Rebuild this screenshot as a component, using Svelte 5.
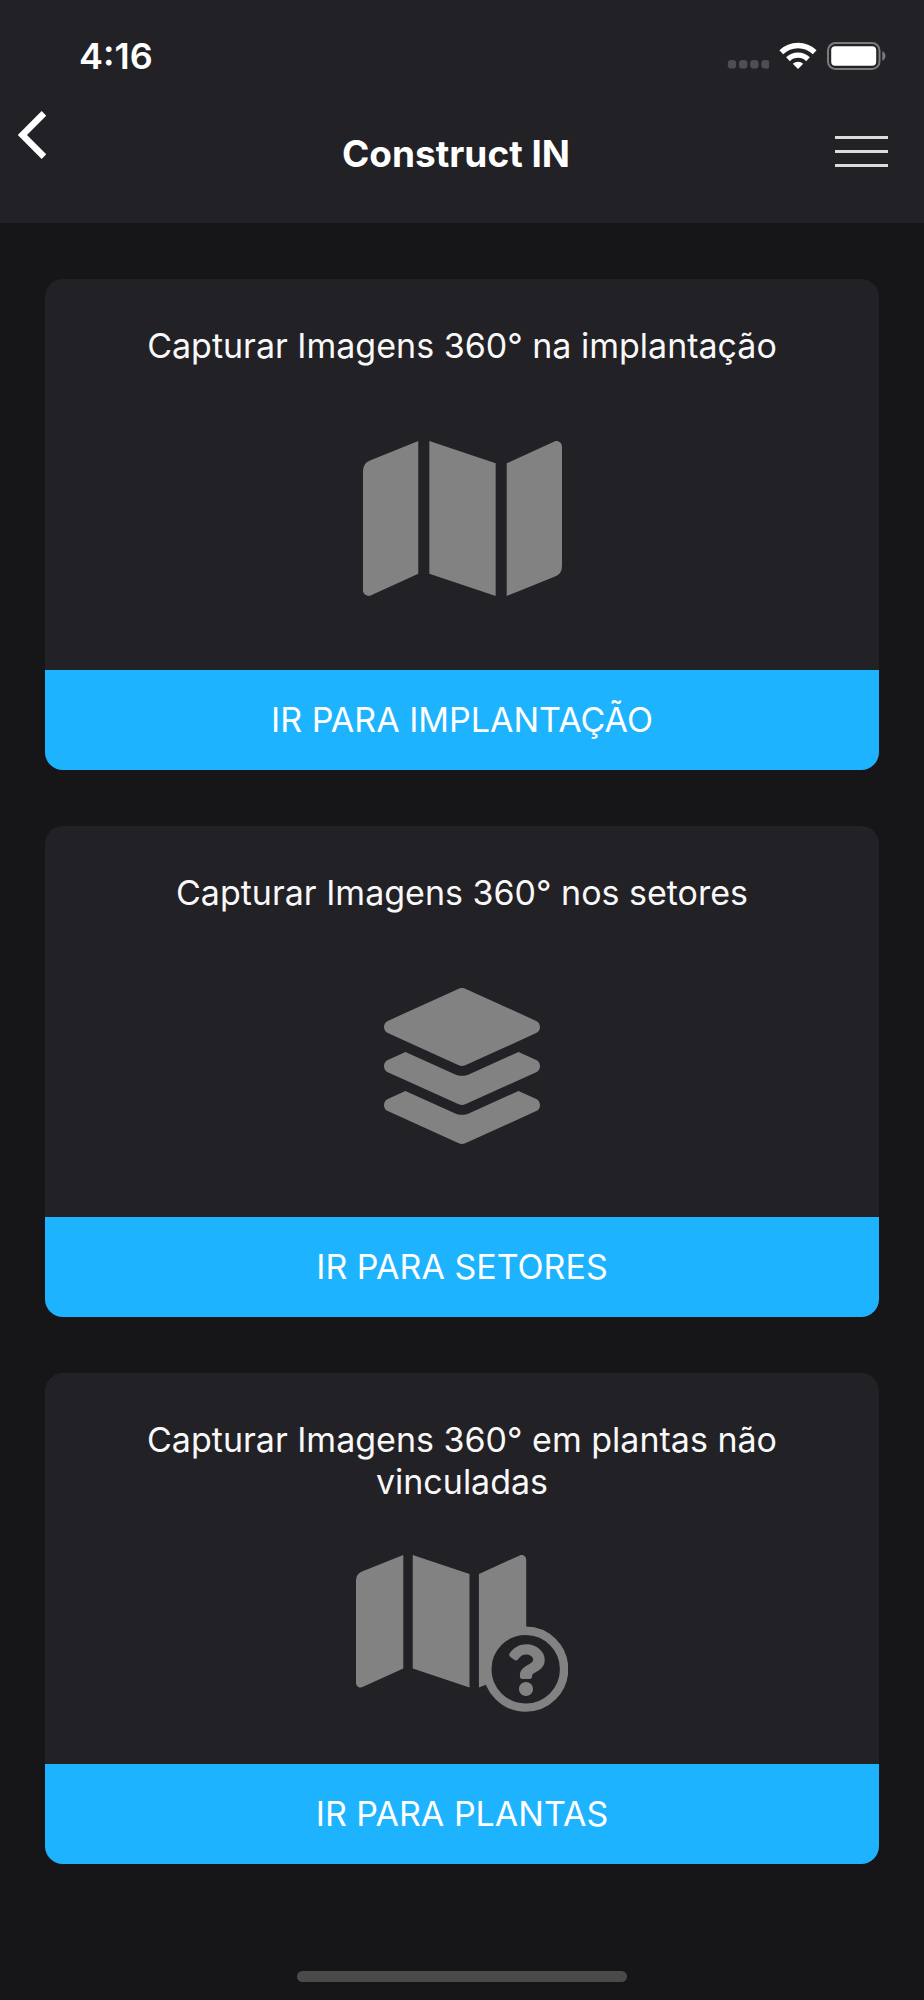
<script lang="ts">
  type IconName = 'map' | 'layers' | 'map-question';

  interface Option {
    title: string;
    action: string;
    icon: IconName;
  }

  const options: Option[] = [
    { title: 'Capturar Imagens 360° na implantação', action: 'Ir para implantação', icon: 'map' },
    { title: 'Capturar Imagens 360° nos setores', action: 'Ir para setores', icon: 'layers' },
    { title: 'Capturar Imagens 360° em plantas não vinculadas', action: 'Ir para plantas', icon: 'map-question' }
  ];

  const mapPath =
    'M0 117.66v346.32c0 11.32 11.43 19.06 21.94 14.86L160 416V32L20.12 87.95A32.006 32.006 0 0 0 0 117.66zM192 416l192 64V96L192 32v384zM554.06 33.16L416 96v384l139.88-55.95A31.996 31.996 0 0 0 576 394.34V48.02c0-11.32-11.43-19.06-21.94-14.86z';
  const layersPath =
    'M12.41 148.02l232.94 105.67c6.8 3.09 14.49 3.09 21.29 0l232.94-105.67c16.55-7.51 16.55-32.52 0-40.03L266.65 2.31a25.607 25.607 0 0 0-21.29 0L12.41 107.98c-16.55 7.51-16.55 32.53 0 40.04zm487.18 88.28l-58.09-26.33-161.64 73.27c-7.56 3.43-15.59 5.17-23.86 5.17s-16.29-1.74-23.86-5.17L70.51 209.97l-58.1 26.33c-16.55 7.5-16.55 32.5 0 40l232.94 105.59c6.8 3.08 14.49 3.08 21.29 0L499.59 276.3c16.55-7.5 16.55-32.5 0-40zm0 127.8l-57.87-26.23-161.86 73.37c-7.56 3.43-15.59 5.17-23.86 5.17s-16.29-1.74-23.86-5.17L70.29 337.87 12.41 364.1c-16.55 7.5-16.55 32.5 0 40l232.94 105.59c6.8 3.08 14.49 3.08 21.29 0L499.59 404.1c16.55-7.5 16.55-32.5 0-40z';
  const questionPath =
    'M202.021 0C122.202 0 70.503 32.703 29.914 91.026c-7.363 10.58-5.093 25.086 5.178 32.874l43.138 32.709c10.373 7.865 25.132 6.026 33.253-4.148 25.049-31.381 43.63-49.449 82.757-49.449 30.764 0 68.816 19.799 68.816 49.631 0 22.552-18.617 34.134-48.993 51.164-35.423 19.86-82.299 44.576-82.299 106.405V320c0 13.255 10.745 24 24 24h72.471c13.255 0 24-10.745 24-24v-5.773c0-42.86 125.268-44.645 125.268-160.627C377.504 66.256 286.902 0 202.021 0zM192 373.459c-38.196 0-69.271 31.075-69.271 69.271 0 38.195 31.075 69.27 69.271 69.27s69.271-31.075 69.271-69.271-31.075-69.27-69.271-69.27z';
</script>

<div class="screen">
  <header>
    <div class="status">
      <span class="time">4:16</span>
      <div class="indicators">
        <svg class="signal" width="42" height="28" viewBox="0 0 42 28" aria-hidden="true">
          {#each [0, 1, 2, 3] as i}
            <rect x={i * 11.2 + 0.8} y="18" width="8.4" height="8.6" rx="3.4" />
          {/each}
        </svg>
        <svg width="38" height="28" viewBox="0 0 38 28" aria-hidden="true">
          <g fill="none" stroke="#fff" stroke-width="5.4">
            <path d="M2.3 10.2A24 24 0 0 1 35.7 10.2" />
            <path d="M9 17.2A14.4 14.4 0 0 1 29 17.2" />
          </g>
          <path d="M19 27l-5.2-5.3a7.6 7.6 0 0 1 10.4 0z" fill="#fff" />
        </svg>
        <svg width="60" height="28" viewBox="0 0 60 28" aria-hidden="true">
          <rect x="1" y="1" width="51.5" height="26" rx="7.5" fill="none" stroke="#7b7b7e" stroke-width="2" />
          <rect x="4.2" y="4.3" width="45" height="19.4" rx="4" fill="#fff" />
          <path d="M55.3 9.2c4.2 1.8 4.2 7.8 0 9.6z" fill="#7b7b7e" />
        </svg>
      </div>
    </div>

    <div class="navbar">
      <button class="back" aria-label="Voltar">
        <svg width="28" height="48" viewBox="0 0 28 48" aria-hidden="true">
          <path d="M26 2.4L4.4 24 26 45.6" fill="none" stroke="#fff" stroke-width="6.6" />
        </svg>
      </button>
      <h1>Construct IN</h1>
      <button class="menu" aria-label="Menu">
        <span></span>
        <span></span>
        <span></span>
      </button>
    </div>
  </header>

  <main>
    {#each options as option}
      <section class="card">
        <h2>{option.title}</h2>
        <div class="picture">
          {#if option.icon === 'map'}
            <svg width="199" height="155" viewBox="0 32 576 448" aria-hidden="true">
              <path d={mapPath} />
            </svg>
          {:else if option.icon === 'layers'}
            <svg width="156" height="156" viewBox="0 0 512 512" aria-hidden="true">
              <path d={layersPath} />
            </svg>
          {:else}
            <svg width="212" height="157" viewBox="0 0 212 157" aria-hidden="true">
              <path d={mapPath} transform="translate(0 -9.4) scale(0.2955)" />
              <circle class="badge" cx="169.7" cy="114.2" r="38.4" />
              <path d={questionPath} transform="translate(150.6 89.2) scale(0.101)" />
            </svg>
          {/if}
        </div>
        <button class="action">{option.action}</button>
      </section>
    {/each}
  </main>

  <div class="home-indicator"></div>
</div>

<style>
  :global(body) {
    margin: 0;
    background: #161618;
  }

  .screen {
    display: flex;
    flex-direction: column;
    box-sizing: border-box;
    min-height: 100vh;
    padding-bottom: 18px;
    background: #161618;
    color: #fff;
    font-family: Inter, 'Liberation Sans', sans-serif;
  }

  button {
    padding: 0;
    border: 0;
    background: none;
    color: inherit;
    font: inherit;
    cursor: pointer;
  }

  svg {
    display: block;
  }

  header {
    padding-bottom: 48px;
    background: #222125;
  }

  .status {
    display: flex;
    align-items: center;
    justify-content: space-between;
    height: 111px;
    padding: 0 37px 0 79px;
  }

  .time {
    font-size: 36px;
    font-weight: 600;
    line-height: 42px;
  }

  .indicators {
    display: flex;
    gap: 10px;
  }

  .signal {
    fill: #4f4e53;
  }

  .navbar {
    display: grid;
    grid-template-columns: 64px 1fr 58px;
    height: 64px;
    padding: 0 36px 0 18px;
  }

  .back {
    align-self: start;
    justify-self: start;
  }

  h1 {
    align-self: center;
    margin: 0;
    padding-top: 22px;
    font-size: 37px;
    font-weight: 700;
    line-height: 42px;
    text-align: center;
  }

  .menu {
    display: flex;
    flex-direction: column;
    align-self: end;
    align-items: flex-end;
    gap: 11px;
    padding-bottom: 8px;
  }

  .menu span {
    width: 53px;
    height: 3px;
    background: #dcdcdd;
  }

  main {
    display: flex;
    flex-direction: column;
    gap: 56px;
    padding: 56px 45px;
  }

  .card {
    display: flex;
    flex-direction: column;
    min-height: 491px;
    border-radius: 18px;
    background: #222125;
    overflow: hidden;
  }

  h2 {
    margin: 0;
    padding: 46px 90px 0;
    color: #f8f8f8;
    font-size: 34px;
    font-weight: 400;
    line-height: 42px;
    text-align: center;
  }

  .picture {
    display: flex;
    flex: 1;
    align-items: center;
    justify-content: center;
    fill: #828282;
  }

  .badge {
    fill: #222125;
    stroke: #828282;
    stroke-width: 8.4;
  }

  .action {
    height: 100px;
    padding-bottom: 2px;
    background: #1eb3ff;
    font-size: 34px;
    font-weight: 400;
    text-transform: uppercase;
  }

  .home-indicator {
    align-self: center;
    width: 330px;
    height: 11px;
    margin-top: auto;
    border-radius: 6px;
    background: #4a4a4a;
  }
</style>
